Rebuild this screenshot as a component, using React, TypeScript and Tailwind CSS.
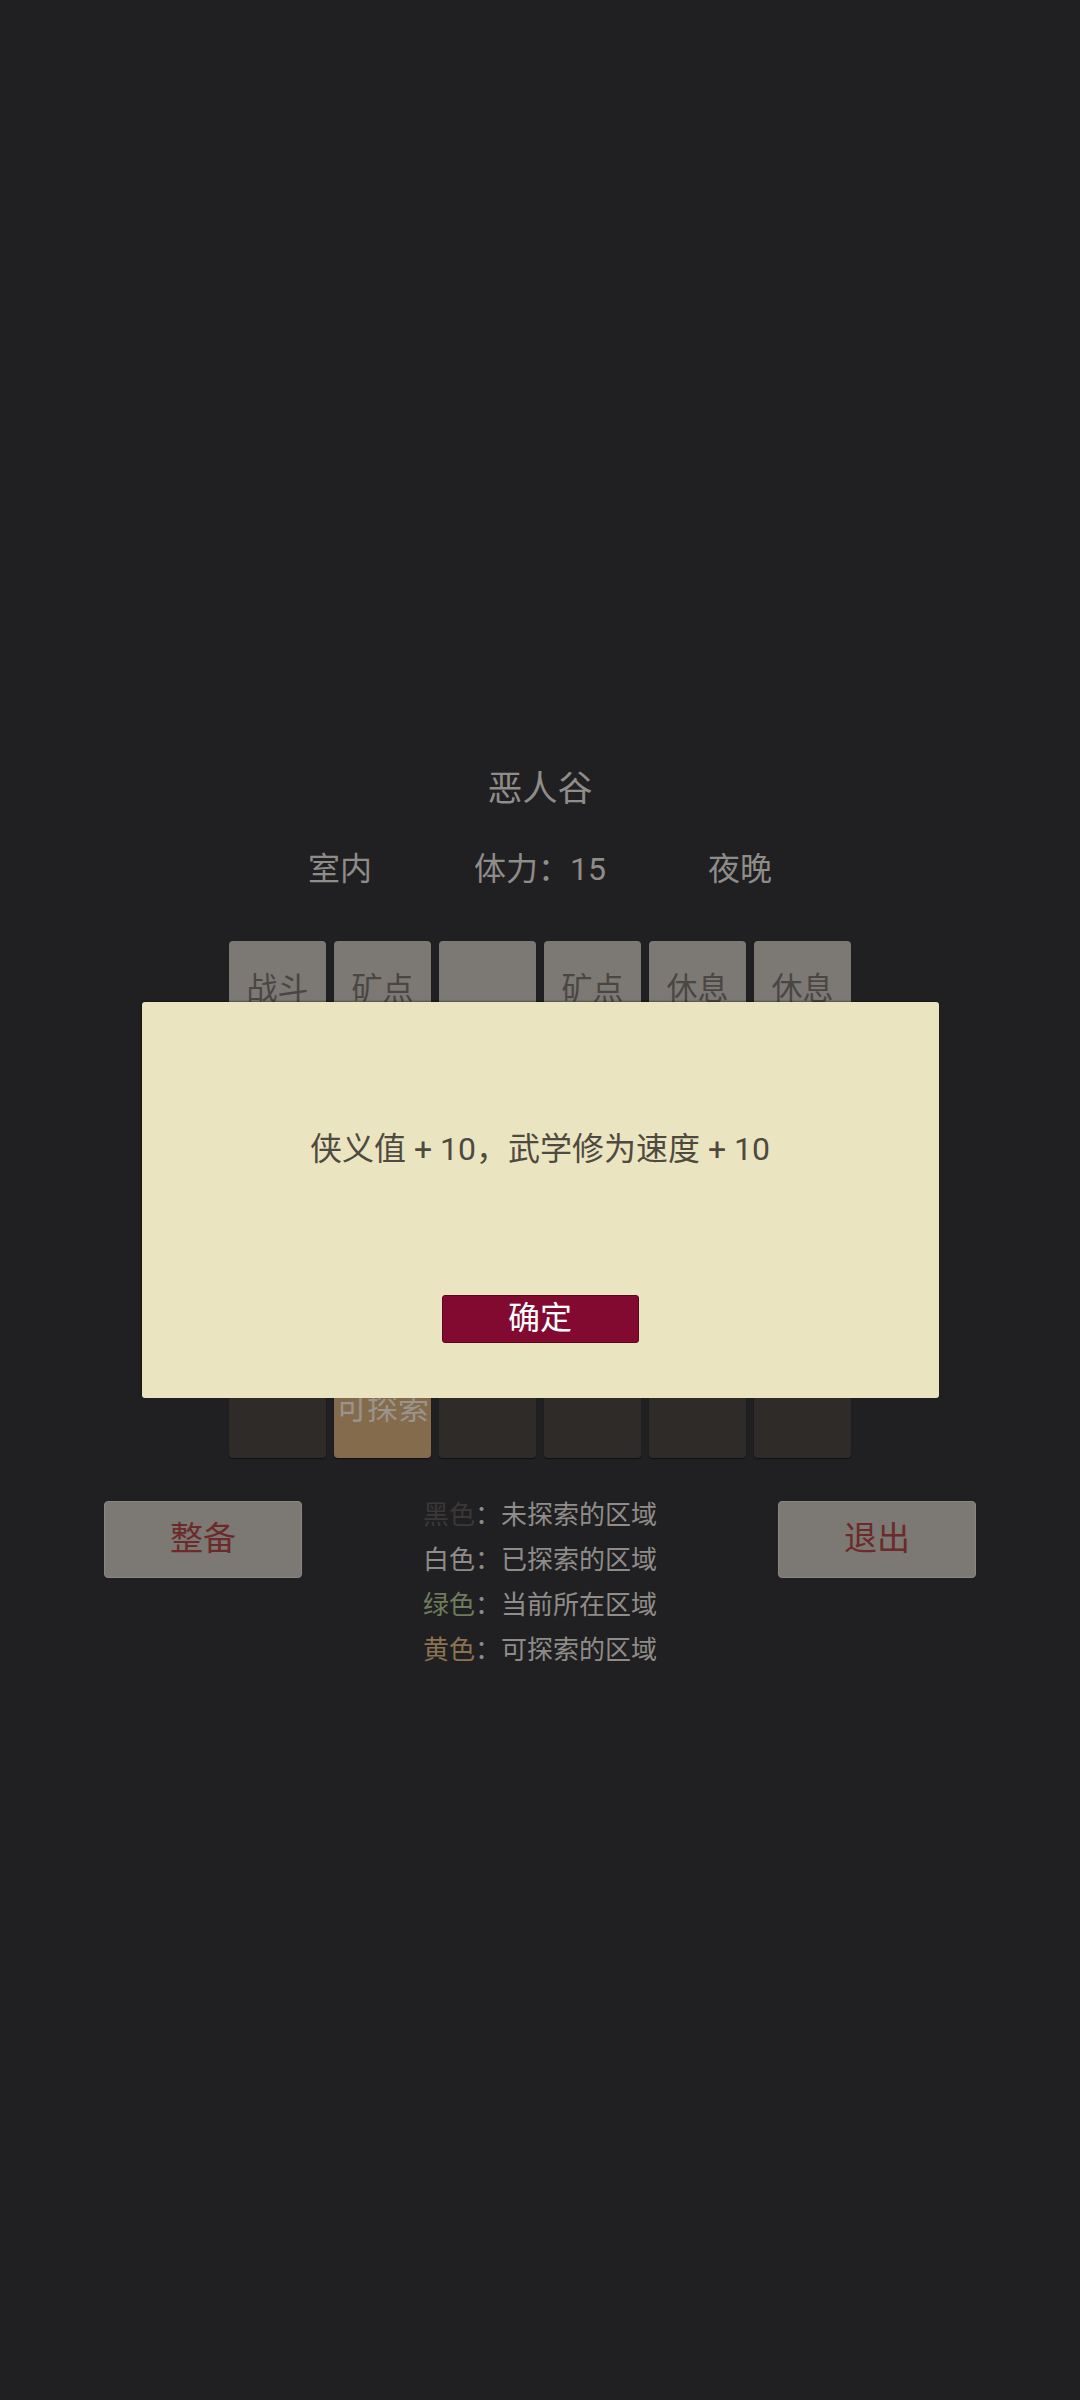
import React from "react";

const FONT = { fontFamily: 'Roboto, "Noto Sans CJK SC", "Noto Sans", sans-serif' };

type Tile = { label: string; kind: "gray" | "dark" | "yellow" };

const rows: Tile[][] = [
  [
    { label: "战斗", kind: "gray" },
    { label: "矿点", kind: "gray" },
    { label: "", kind: "gray" },
    { label: "矿点", kind: "gray" },
    { label: "休息", kind: "gray" },
    { label: "休息", kind: "gray" },
  ],
  [
    { label: "", kind: "gray" },
    { label: "", kind: "gray" },
    { label: "", kind: "gray" },
    { label: "", kind: "gray" },
    { label: "", kind: "gray" },
    { label: "", kind: "gray" },
  ],
  [
    { label: "", kind: "dark" },
    { label: "", kind: "gray" },
    { label: "", kind: "gray" },
    { label: "", kind: "dark" },
    { label: "", kind: "dark" },
    { label: "", kind: "dark" },
  ],
  [
    { label: "", kind: "dark" },
    { label: "", kind: "gray" },
    { label: "", kind: "dark" },
    { label: "", kind: "dark" },
    { label: "", kind: "dark" },
    { label: "", kind: "dark" },
  ],
  [
    { label: "", kind: "dark" },
    { label: "可探索", kind: "yellow" },
    { label: "", kind: "dark" },
    { label: "", kind: "dark" },
    { label: "", kind: "dark" },
    { label: "", kind: "dark" },
  ],
];

function TileBox({ t }: { t: Tile }) {
  const cls =
    t.kind === "gray"
      ? "bg-[#7c7974] text-[#4a4643]"
      : t.kind === "yellow"
      ? "bg-[#846b4c] text-[#9a948e]"
      : "bg-[#2f2b29] text-[#8f8c89]";
  return (
    <div
      className={`${cls} w-[97px] h-[97px] pb-[3px] rounded-[4px] flex items-center justify-center text-[31px] leading-none whitespace-nowrap overflow-visible shadow-[0_1px_1px_rgba(0,0,0,0.5)]`}
    >
      {t.label}
    </div>
  );
}

export default function App() {
  return (
    <div
      className="relative w-[1080px] h-[2400px] bg-[#202022] overflow-hidden"
      style={FONT}
    >
      <div className="flex flex-col items-center pt-[766px]">
        <div className="h-[48px] leading-[48px] text-[35px] text-[#8f8c89]">
          恶人谷
        </div>
        <div className="mt-[31px] grid grid-cols-[200px_200px_200px] h-[48px] leading-[48px] text-[32px] text-[#8f8c89] text-center">
          <div>室内</div>
          <div>体力：15</div>
          <div>夜晚</div>
        </div>
        <div className="mt-[48px] flex flex-col gap-[8px]">
          {rows.map((r, i) => (
            <div key={i} className="flex gap-[8px]">
              {r.map((t, j) => (
                <TileBox key={j} t={t} />
              ))}
            </div>
          ))}
        </div>
        <div className="mt-[35px] w-full px-[104px] flex justify-between items-start">
          <button className="mt-[8px] w-[198px] h-[77px] pb-[2px] bg-[#7c7974] border border-[#8a8783] rounded-[4px] text-[33px] text-[#6c2a2a] flex items-center justify-center">
            整备
          </button>
          <div className="flex flex-col text-[26px] leading-[45px] text-[#8f8c89]">
            <div>
              <span className="text-[#3b3837]">黑色</span>：未探索的区域
            </div>
            <div>
              <span className="text-[#8f8c89]">白色</span>：已探索的区域
            </div>
            <div>
              <span className="text-[#6f7c5c]">绿色</span>：当前所在区域
            </div>
            <div>
              <span className="text-[#8d7252]">黄色</span>：可探索的区域
            </div>
          </div>
          <button className="mt-[8px] w-[198px] h-[77px] pb-[2px] bg-[#7c7974] border border-[#8a8783] rounded-[4px] text-[33px] text-[#6c2a2a] flex items-center justify-center">
            退出
          </button>
        </div>
      </div>

      <div className="absolute inset-0 flex items-center justify-center">
        <div className="w-[797px] h-[396px] bg-[#ebe4c0] rounded-[3px] shadow-[-1px_-1px_2px_rgba(0,0,0,0.35)] flex flex-col items-center">
          <div className="mt-[123px] h-[48px] leading-[48px] text-[32px] text-[#4f4a40] whitespace-nowrap">
            侠义值 + 10，武学修为速度 + 10
          </div>
          <button className="mt-[122px] w-[197px] h-[48px] pb-[2px] bg-[#820a31] border border-[#5a0620] rounded-[3px] text-[32px] leading-none text-white flex items-center justify-center">
            确定
          </button>
        </div>
      </div>
    </div>
  );
}
